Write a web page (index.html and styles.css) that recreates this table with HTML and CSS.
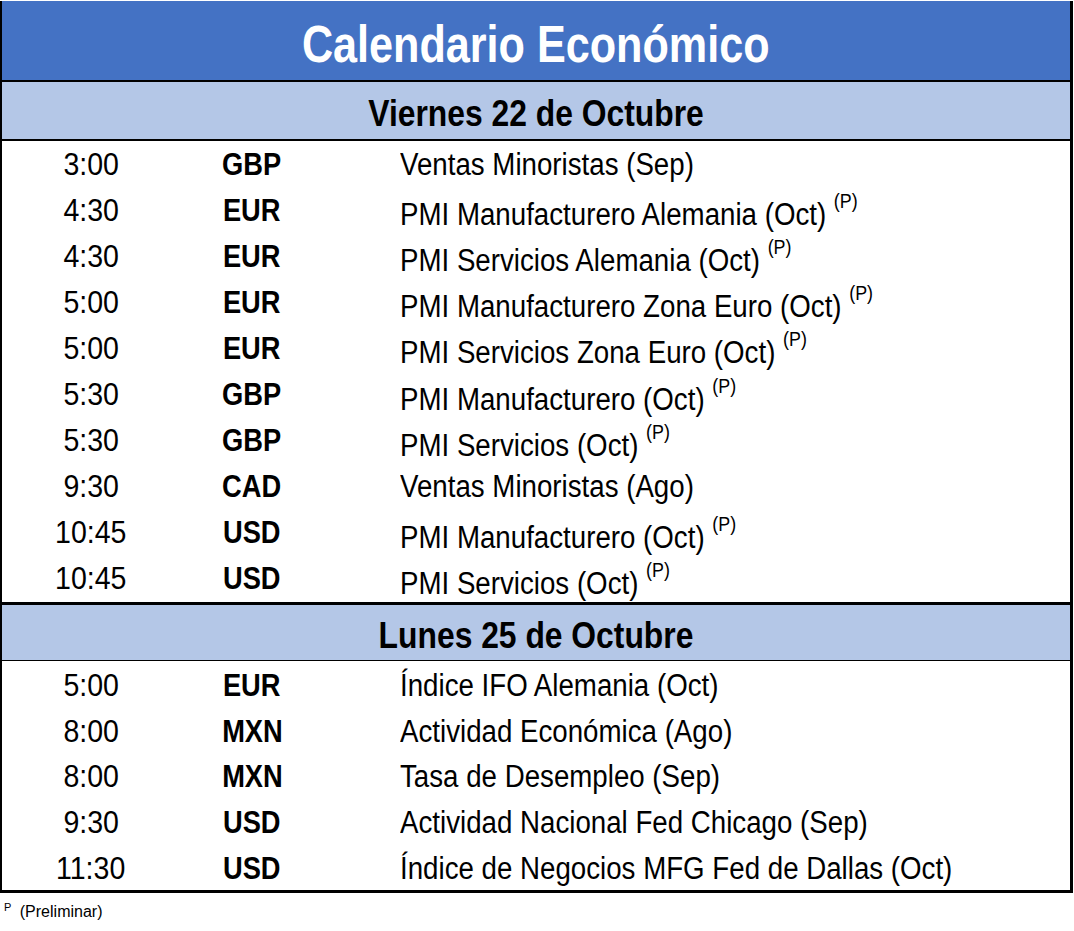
FILE: index.html
```html
<!DOCTYPE html>
<html lang="es">
<head>
<meta charset="utf-8">
<title>Calendario Económico</title>
<link rel="stylesheet" href="styles.css">
</head>
<body>
<div class="cal">
  <div class="title"><span class="squeeze">Calendario Económico</span></div>
  <div class="day day-first"><span class="squeeze">Viernes 22 de Octubre</span></div>
  <div class="rows rows-first">
    <div class="row"><span class="time"><span>3:00</span></span><span class="cur"><span>GBP</span></span><span class="desc"><span>Ventas Minoristas (Sep)</span></span></div>
    <div class="row sup-row"><span class="time"><span>4:30</span></span><span class="cur"><span>EUR</span></span><span class="desc"><span>PMI Manufacturero Alemania (Oct) <sup>(P)</sup></span></span></div>
    <div class="row sup-row"><span class="time"><span>4:30</span></span><span class="cur"><span>EUR</span></span><span class="desc"><span>PMI Servicios Alemania (Oct) <sup>(P)</sup></span></span></div>
    <div class="row sup-row"><span class="time"><span>5:00</span></span><span class="cur"><span>EUR</span></span><span class="desc"><span>PMI Manufacturero Zona Euro (Oct) <sup>(P)</sup></span></span></div>
    <div class="row sup-row"><span class="time"><span>5:00</span></span><span class="cur"><span>EUR</span></span><span class="desc"><span>PMI Servicios Zona Euro (Oct) <sup>(P)</sup></span></span></div>
    <div class="row sup-row"><span class="time"><span>5:30</span></span><span class="cur"><span>GBP</span></span><span class="desc"><span>PMI Manufacturero (Oct) <sup>(P)</sup></span></span></div>
    <div class="row sup-row"><span class="time"><span>5:30</span></span><span class="cur"><span>GBP</span></span><span class="desc"><span>PMI Servicios (Oct) <sup>(P)</sup></span></span></div>
    <div class="row"><span class="time"><span>9:30</span></span><span class="cur"><span>CAD</span></span><span class="desc"><span>Ventas Minoristas (Ago)</span></span></div>
    <div class="row sup-row"><span class="time"><span>10:45</span></span><span class="cur"><span>USD</span></span><span class="desc"><span>PMI Manufacturero (Oct) <sup>(P)</sup></span></span></div>
    <div class="row sup-row"><span class="time"><span>10:45</span></span><span class="cur"><span>USD</span></span><span class="desc"><span>PMI Servicios (Oct) <sup>(P)</sup></span></span></div>
  </div>
  <div class="day day-second"><span class="squeeze">Lunes 25 de Octubre</span></div>
  <div class="rows rows-second">
    <div class="row"><span class="time"><span>5:00</span></span><span class="cur"><span>EUR</span></span><span class="desc"><span>Índice IFO Alemania (Oct)</span></span></div>
    <div class="row"><span class="time"><span>8:00</span></span><span class="cur"><span>MXN</span></span><span class="desc"><span>Actividad Económica (Ago)</span></span></div>
    <div class="row"><span class="time"><span>8:00</span></span><span class="cur"><span>MXN</span></span><span class="desc"><span>Tasa de Desempleo (Sep)</span></span></div>
    <div class="row"><span class="time"><span>9:30</span></span><span class="cur"><span>USD</span></span><span class="desc"><span>Actividad Nacional Fed Chicago (Sep)</span></span></div>
    <div class="row"><span class="time"><span>11:30</span></span><span class="cur"><span>USD</span></span><span class="desc"><span>Índice de Negocios MFG Fed de Dallas (Oct)</span></span></div>
  </div>
</div>
<div class="note"><sup>P</sup> (Preliminar)</div>
</body>
</html>
```

FILE: styles.css
```css
html, body {
  margin: 0;
  padding: 0;
  background: #ffffff;
}
body {
  padding-top: 1px;
  font-family: "Liberation Sans", Arial, sans-serif;
  color: #000000;
}
.cal {
  width: 1068px;
  border-left: 2px solid #000000;
  border-right: 3px solid #000000;
  border-bottom: 3px solid #000000;
}
.squeeze {
  display: inline-block;
  white-space: nowrap;
  transform-origin: center;
}
.title {
  height: 81px;
  box-sizing: border-box;
  padding-top: 6px;
  background: #4472c4;
  color: #ffffff;
  font-weight: bold;
  font-size: 52px;
  display: flex;
  align-items: center;
  justify-content: center;
  border-bottom: 2px solid #000000;
}
.title .squeeze {
  transform: scaleX(0.83);
}
.day {
  background: #b4c7e7;
  font-weight: bold;
  font-size: 37px;
  display: flex;
  align-items: center;
  justify-content: center;
  box-sizing: content-box;
}
.day .squeeze {
  transform: scaleX(0.86);
}
.day-first {
  height: 51px;
  padding-top: 6px;
  border-bottom: 2px solid #000000;
}
.day-second {
  height: 48px;
  padding-top: 7px;
  border-top: 3px solid #000000;
  border-bottom: 1px solid #000000;
}
.row {
  height: 46.1px;
  box-sizing: border-box;
  padding-top: 1px;
  display: grid;
  grid-template-columns: 178px 144px 1fr;
  align-items: center;
  font-size: 31px;
}
.rows-second .row {
  height: 45.8px;
  padding-top: 4px;
}
.time {
  text-align: center;
}
.time > span {
  display: inline-block;
  transform: scaleX(0.92);
}
.cur {
  text-align: center;
  font-weight: bold;
}
.cur > span {
  display: inline-block;
  transform: scaleX(0.88);
}
.desc {
  padding-left: 76px;
  white-space: nowrap;
}
.desc > span {
  display: inline-block;
  transform: scaleX(0.893);
  transform-origin: left center;
}
.sup-row .desc {
  padding-top: 9px;
}
.desc sup {
  font-size: 20px;
  vertical-align: 17px;
  line-height: 0;
}
.note {
  font-size: 16px;
  padding: 10px 0 0 4px;
}
.note sup {
  font-size: 11px;
  vertical-align: 6px;
  line-height: 0;
  margin-right: 4px;
}
```
